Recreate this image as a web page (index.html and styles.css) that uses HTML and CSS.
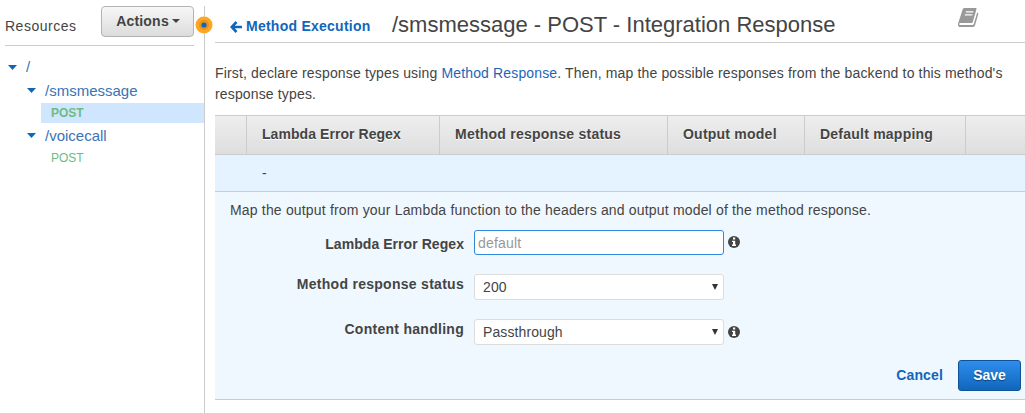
FILE: index.html
```html
<!DOCTYPE html>
<html lang="en">
<head>
<meta charset="utf-8">
<title>Integration Response</title>
<link rel="stylesheet" href="styles.css">
</head>
<body>
<div class="app">
  <aside class="sidebar">
    <div class="side-head">
      <span class="side-title">Resources</span>
      <button class="actions" type="button"><span>Actions</span><svg width="8" height="4" viewBox="0 0 8 4"><path d="M0 0h8L4 4z" fill="#444"/></svg></button>
    </div>
    <ul class="tree">
      <li class="node root"><svg class="caret" width="9" height="5" viewBox="0 0 9 5"><path d="M0 0h9L4.500 5z"/></svg><span>/</span></li>
      <li class="node child"><svg class="caret" width="9" height="5" viewBox="0 0 9 5"><path d="M0 0h9L4.500 5z"/></svg><span>/smsmessage</span></li>
      <li class="method selected">POST</li>
      <li class="node child voice"><svg class="caret" width="9" height="5" viewBox="0 0 9 5"><path d="M0 0h9L4.500 5z"/></svg><span>/voicecall</span></li>
      <li class="method">POST</li>
    </ul>
    <svg class="handle" width="18" height="18" viewBox="0 0 18 18"><circle cx="9" cy="9" r="8.500" fill="#ffa51f"/><circle cx="9" cy="9" r="5" fill="#e6951c"/><circle cx="9" cy="9" r="2.600" fill="#1166bb"/></svg>
  </aside>
  <main class="main">
    <header class="page-head">
      <a class="back"><svg width="12" height="12" viewBox="0 0 12 12"><path d="M6.500 1L1.700 6l4.800 5M2 6h10" fill="none" stroke="#1166bb" stroke-width="2.600"/></svg><span>Method Execution</span></a>
      <h1 class="title">/smsmessage - POST - Integration Response</h1>
      <svg class="book" width="22" height="20" viewBox="0 0 22 20"><path d="M6.500 0h11.300q1 0 .7 1l-3.700 13q-.3 1-1.300 1H2.500q-1.200 0-1.400 1.100.1 1 1.200 1h12.200q1 0 1.300-1L19.200 4.500q1.400.5 1 1.700L17 17.600Q16.500 19 15 19H2.600Q0 19 0 16.400q0-1.200.5-2.100L4.700 1.300Q5.200 0 6.500 0z" fill="#999"/><path d="M7.800 3.900h7.500M6.900 6.900h7.500" stroke="#fff" stroke-width="1.300"/></svg>
    </header>
    <p class="intro">First, declare response types using <a>Method Response</a>. Then, map the possible responses from the backend to this method's<br>response types.</p>
    <div class="grid head-row">
      <div></div><div class="regex">Lambda Error Regex</div><div>Method response status</div><div>Output model</div><div>Default mapping</div><div></div>
    </div>
    <div class="grid data-row"><div></div><div>-</div></div>
    <section class="panel">
      <p class="hint">Map the output from your Lambda function to the headers and output model of the method response.</p>
      <div class="field f1"><label class="regex">Lambda Error Regex</label><div class="input">default</div><svg class="info" width="12" height="12" viewBox="0 0 12 12"><circle cx="6" cy="6" r="6" fill="#444"/><path d="M5 1.500h2.200v2H5zM4 4.700h3.200v3.800H8V10H4V8.500h1V6.100H4z" fill="#fff"/></svg></div>
      <div class="field f2"><label>Method response status</label><div class="select"><span>200</span><svg width="6" height="6" viewBox="0 0 6 6"><path d="M0 0h6L3 6z" fill="#333"/></svg></div></div>
      <div class="field f3"><label>Content handling</label><div class="select"><span>Passthrough</span><svg width="6" height="6" viewBox="0 0 6 6"><path d="M0 0h6L3 6z" fill="#333"/></svg></div><svg class="info" width="12" height="12" viewBox="0 0 12 12"><circle cx="6" cy="6" r="6" fill="#444"/><path d="M5 1.500h2.200v2H5zM4 4.700h3.200v3.800H8V10H4V8.500h1V6.100H4z" fill="#fff"/></svg></div>
      <div class="buttons"><a class="cancel">Cancel</a><button class="save" type="button">Save</button></div>
    </section>
  </main>
</div>
</body>
</html>
```
FILE: styles.css
```css
* { box-sizing: border-box; }
body { margin: 0; background: #fff; color: #444; font: 14px/21px "Liberation Sans", Arial, sans-serif; overflow: hidden; }
svg { display: block; flex: none; }
.app { display: flex; height: 413px; padding-top: 6px; }
.sidebar { position: relative; width: 205px; flex: none; border-right: 1px solid #ccc; }
.side-head { display: flex; justify-content: space-between; margin: 0 10px 0 5px; height: 40px; border-bottom: 1px solid #ccc; }
.side-title { padding-top: 10px; font-size: 14px; letter-spacing: 0.5px; }
.actions { display: flex; align-items: center; justify-content: center; gap: 3px; width: 93px; height: 31px; padding: 0 0 1px 1px; border: 1px solid #b3b3b3; border-radius: 4px; background: linear-gradient(#f7f7f7, #dcdcdc); color: #444; font: bold 14px "Liberation Sans", Arial, sans-serif; letter-spacing: 0.2px; }
.tree { list-style: none; margin: 9px 0 0; padding: 0; }
.node { display: flex; align-items: center; height: 22px; color: #3a73b5; font-size: 15px; }
.caret { fill: #1166bb; }
.node .caret { margin-top: 1px; }
.root { padding-left: 8px; gap: 9px; height: 23px; }
.child { padding-left: 27px; gap: 9px; height: 25px; }
.child span { margin-top: -1px; }
.child .caret { margin-top: 0; }
.voice { height: 25px; }
.voice span { margin-top: 0; }
.method { height: 20px; margin-left: 41px; padding-left: 10px; color: #6dbb83; font-size: 12px; line-height: 20px; }
.selected { background: #d0e6ff; font-weight: bold; }
.handle { position: absolute; left: 195px; top: 10px; }
.main { flex: 1; min-width: 0; padding-left: 10px; }
.page-head { display: flex; height: 37px; border-bottom: 1px solid #ccc; }
.back { display: flex; gap: 4px; padding: 10px 0 0 15px; color: #1166bb; font-weight: bold; letter-spacing: 0.25px; width: 177px; flex: none; white-space: nowrap; }
.back svg { margin-top: 5px; }
.title { margin: 5px 0 0; width: 567px; font-size: 22px; line-height: 27px; font-weight: normal; white-space: nowrap; }
.book { margin-top: 2px; margin-left: -1px; }
.intro { margin: 20px 0 0; height: 52px; white-space: nowrap; letter-spacing: 0.15px; }
.intro a { color: #1e65b8; }
.grid { display: grid; grid-template-columns: 32px 193px 228px 137px 161px 1fr; }
.head-row { height: 40px; border-top: 1px solid #ccc; border-bottom: 1px solid #ccc; background: linear-gradient(#eee, #dedede); font-weight: bold; letter-spacing: 0.23px; line-height: 37px; text-shadow: 0 1px 0 #fff; }
.head-row div { border-right: 1px solid #ccc; padding-left: 15px; white-space: nowrap; }
.head-row div:last-child { border-right: 0; }
.head-row .regex, .field .regex { letter-spacing: 0.06px; }
.data-row { height: 37px; border-bottom: 1px solid #ccc; background: #e5f2ff; line-height: 37px; }
.data-row div { padding-left: 15px; }
.panel { height: 208px; background: #f0f8ff; border-bottom: 1px solid #ccc; padding-top: 8px; }
.hint { margin: 0 0 9px 15px; white-space: nowrap; letter-spacing: 0.175px; }
.field { display: flex; align-items: flex-start; }
.field label { width: 249px; margin-right: 10px; text-align: right; font-weight: bold; letter-spacing: 0.28px; }
.input { width: 250px; height: 25px; border: 1px solid #2e88dd; border-radius: 3px; background: #fff; color: #999; padding-left: 3px; line-height: 25px; letter-spacing: 0.2px; }
.select { display: flex; justify-content: space-between; align-items: center; width: 250px; height: 26px; border: 1px solid #ddd; border-radius: 3px; background: #fff; padding: 0 5px 0 8px; letter-spacing: 0.1px; }
.info { margin: 6px 0 0 4px; }
.f1 { height: 44px; }
.f1 label { padding-top: 4px; }
.f2 { height: 45px; }
.f3 { height: 41px; }
.f3 .info { margin-top: 7px; }
.buttons { display: flex; justify-content: flex-end; align-items: center; gap: 15px; padding-right: 4px; }
.cancel { color: #1166bb; font-weight: bold; letter-spacing: 0.15px; }
.save { width: 63px; height: 31px; border: 1px solid #0f5299; border-radius: 3px; background: linear-gradient(#2e8ded, #1166bb); color: #fff; font: bold 14px "Liberation Sans", Arial, sans-serif; text-shadow: 0 1px 1px #0b3f75; padding: 0 0 2px; }
```
